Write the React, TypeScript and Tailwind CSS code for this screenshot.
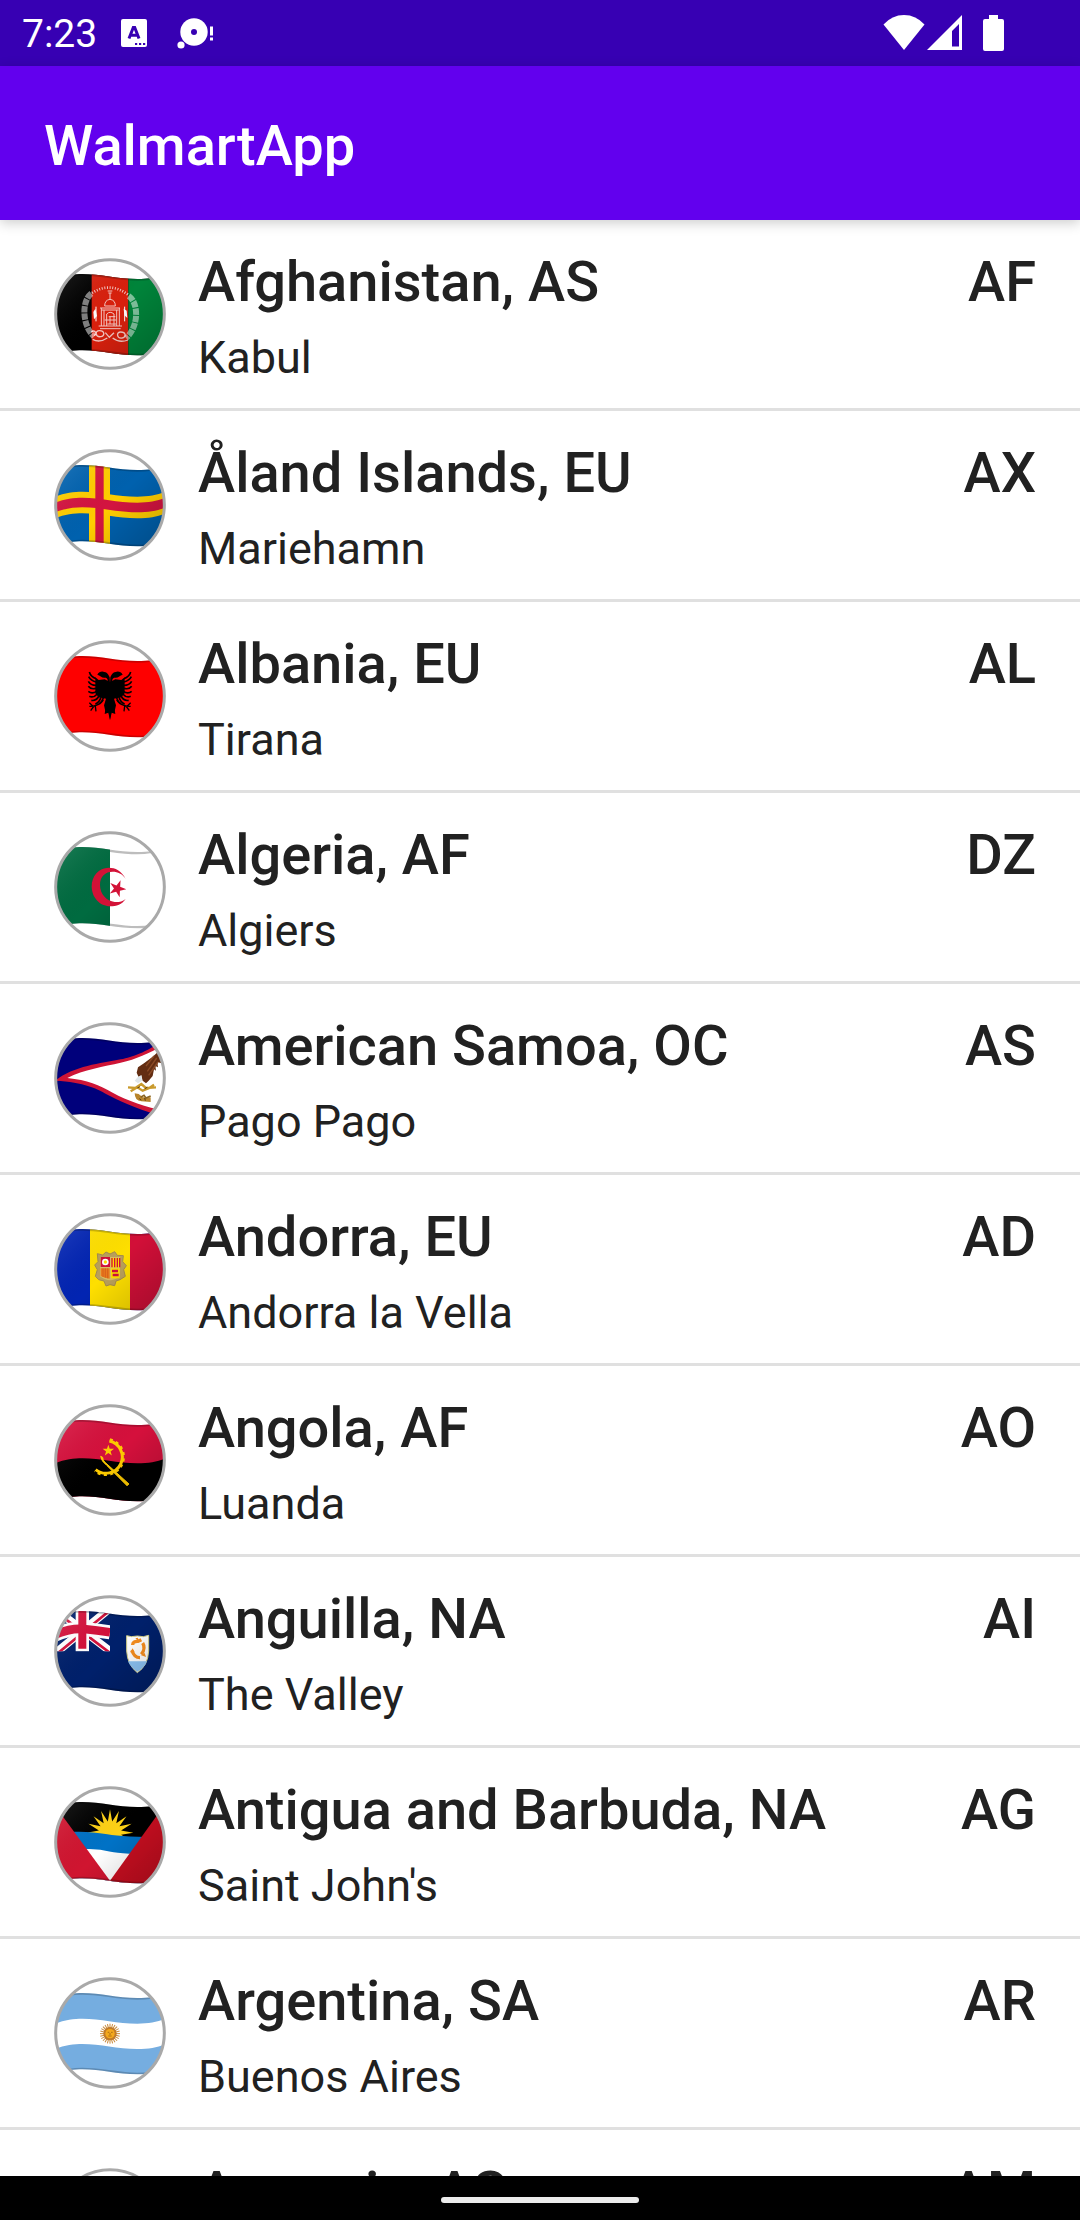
import React from "react";

type Country = {
  name: string;
  region: string;
  code: string;
  capital: string;
};

const countries: Country[] = [
  { name: "Afghanistan", region: "AS", code: "AF", capital: "Kabul" },
  { name: "Åland Islands", region: "EU", code: "AX", capital: "Mariehamn" },
  { name: "Albania", region: "EU", code: "AL", capital: "Tirana" },
  { name: "Algeria", region: "AF", code: "DZ", capital: "Algiers" },
  { name: "American Samoa", region: "OC", code: "AS", capital: "Pago Pago" },
  { name: "Andorra", region: "EU", code: "AD", capital: "Andorra la Vella" },
  { name: "Angola", region: "AF", code: "AO", capital: "Luanda" },
  { name: "Anguilla", region: "NA", code: "AI", capital: "The Valley" },
  { name: "Antigua and Barbuda", region: "NA", code: "AG", capital: "Saint John's" },
  { name: "Argentina", region: "SA", code: "AR", capital: "Buenos Aires" },
  { name: "Armenia", region: "AS", code: "AM", capital: "Yerevan" },
];

// A wavy horizontal band of cloth; both offsets are measured from the flag's top edge.
function band(top: number, bottom: number) {
  const a = top;
  const b = bottom;
  return (
    `M0 ${64 + a}C30 ${52 + a} 60 ${48 + a} 85 ${48 + a}C140 ${48 + a} 190 ${63 + a} 250 ${63 + a}C285 ${63 + a} 310 ${58 + a} 336 ${48 + a}` +
    `L336 ${48 + b}C310 ${58 + b} 285 ${63 + b} 250 ${63 + b}C190 ${63 + b} 140 ${48 + b} 85 ${48 + b}C60 ${48 + b} 30 ${52 + b} 0 ${64 + b}Z`
  );
}

function star(cx: number, cy: number, outer: number, inner: number, points: number, turn: number) {
  const out: string[] = [];
  for (let i = 0; i < points * 2; i++) {
    const r = i % 2 === 0 ? outer : inner;
    const t = ((turn + (i * 180) / points) * Math.PI) / 180;
    out.push(`${(cx + r * Math.cos(t)).toFixed(1)},${(cy + r * Math.sin(t)).toFixed(1)}`);
  }
  return out.join(" ");
}

const spokes = (n: number, from: number, to: number) =>
  Array.from({ length: n }, (_, i) => from + ((to - from) * i) / (n - 1));

function Afghanistan() {
  return (
    <>
      <rect width="336" height="336" fill="#000" />
      <rect x="113" width="110" height="336" fill="#d8200f" />
      <rect x="223" width="113" height="336" fill="#00843a" />
      <g fill="none" stroke="#fff">
        <g opacity="0.5" strokeWidth="18">
          <path d="M112 106C82 130 84 202 120 236" strokeDasharray="19 3" />
          <path d="M224 114C256 136 254 208 216 240" strokeDasharray="19 3" />
        </g>
        <g opacity="0.75" strokeWidth="3">
          <path d="M114 105Q168 70 222 110" strokeWidth="8" strokeDasharray="3 5" />
          <path d="M161 99h14M163 105h10M168 105v20" />
          <path d="M152 144q0-18 16-20q16 2 16 20zM138 150h60M142 156h52M142 150v54M150 156v48M196 150v54M188 156v48M134 204h70M138 212h62" />
          <path d="M158 204v-36q10-10 22 0v36M164 176h20M168 176v22M152 186h34M160 198h26" />
          <path d="M112 222c10-10 20 8 8 10M136 218c-14 0-12 20 4 18c14-2 12-18-4-18M200 222c-14 0-12 20 4 18c14-2 12-18-4-18M154 224l12 14l14-14M116 244q20 12 44-4M176 240q20 16 46 6" strokeWidth="4" />
        </g>
      </g>
      <path d="M126 146v44M212 146v44" stroke="#fff" strokeWidth="3" />
      <path d="M124 152l-6 10l2 22l9-10zM209 152l9 6l2 22l-9-8z" fill="#fff" />
    </>
  );
}

function Aland() {
  return (
    <>
      <rect width="336" height="336" fill="#0061ae" />
      <rect x="105" width="63" height="336" fill="#ffcd00" />
      <path d={band(80, 145)} fill="#ffcd00" />
      <rect x="124" width="25" height="336" fill="#d31440" />
      <path d={band(98, 127)} fill="#d31440" />
    </>
  );
}

function Albania() {
  const half = (
    <>
      <path d="M0 132L-8 128C-5 120-8 112-16 113C-24 114-30 107-38 104C-34 96-24 92-17 96C-6 98-4 106-1 112Z" />
      <path d="M0 126L-16 118L-34 120L-44 112V160L-34 172L-12 176L-18 196L-14 214L-6 208L0 238Z" />
      <path
        d="M-42 116Q-58 110-62 96M-42 126Q-58 122-64 110M-42 136Q-58 136-65 124M-42 145Q-58 149-65 139M-40 154Q-54 163-65 154M-38 162Q-50 175-62 169M-33 168Q-42 184-56 181M-27 172Q-32 188-44 192M-20 174Q-24 186-32 192"
        fill="none"
        stroke="#000"
        strokeWidth="5"
      />
      <path d="M-20 180Q-34 200-62 199M-48 198l-10 14M-44 198l2 16M-52 198l-10-10" fill="none" stroke="#000" strokeWidth="4" />
    </>
  );
  return (
    <>
      <rect width="336" height="336" fill="#fe0000" />
      <g transform="translate(168 0)">
        {half}
        <g transform="scale(-1 1)">{half}</g>
        <path d="M-12 196L-16 222L-5 218L0 241L5 218L16 222L12 196Z" />
      </g>
    </>
  );
}

function Algeria() {
  return (
    <>
      <rect width="336" height="336" fill="#fff" />
      <path d={band(0, 229)} fill="none" stroke="#bdbdbd" strokeWidth="14" />
      <rect width="168" height="336" fill="#006b40" />
      <rect width="168" height="336" fill="url(#shade-DZ)" />
      <path
        d="M215 143C202 119 184 110 164 110C134 110 113 136 113 166C113 200 138 226 168 226C188 226 204 220 215 204C204 212 194 214 182 213C158 210 138 190 138 162C138 136 154 122 176 122C192 122 204 128 215 143Z"
        fill="#d31237"
      />
      <polygon points={star(190, 173, 27, 10, 5, 3)} fill="#d31237" />
    </>
  );
}

function AmericanSamoa() {
  return (
    <>
      <rect width="336" height="336" fill="#00007b" />
      <path d="M4 176C60 132 140 124 200 112C240 104 270 92 336 52V286C270 268 210 244 168 222C130 200 90 180 4 176Z" fill="#ce1436" />
      <path d="M40 168C90 142 150 134 200 122C250 111 280 96 336 66V268C280 256 220 236 176 212C136 190 100 174 40 168Z" fill="#fff" />
      <path d="M314 88L296 104L270 124L252 136L248 152L254 166L262 160L266 176L276 184L284 176L296 162L300 142L306 146L304 132L312 136L310 120L322 124V90Z" fill="#632d12" />
      <path d="M300 102L276 132M308 108L280 148M312 120L284 160" stroke="#8b4a25" strokeWidth="4" />
      <path d="M252 164L242 176L252 184L264 176L262 160Z" fill="#dfe6ea" />
      <path d="M222 196L244 198L262 186L276 198L306 196M230 208L250 196L266 206L286 198L300 188" stroke="#c99a2c" strokeWidth="7" fill="none" />
      <path d="M242 214Q242 236 262 238L290 240V226L266 226L254 216Z" fill="#b8842b" />
      <path d="M260 226l10-6l6 8l14-6" stroke="#8a6420" strokeWidth="5" fill="none" />
      <path d="M250 198l8-4M272 200l8-4M256 230l6 4M272 228l2 8" stroke="#5a3a12" strokeWidth="3" />
    </>
  );
}

function Andorra() {
  return (
    <>
      <rect width="336" height="336" fill="#0224b2" />
      <rect x="108" width="120" height="336" fill="#fedf00" />
      <rect x="228" width="108" height="336" fill="#d20f38" />
      <path
        d="M130 122L146 126L156 117L168 123L182 116L190 127L208 128L206 146L217 158L209 170L214 190L198 200L186 204L182 218L168 215L156 219L150 204L134 200L124 190L130 170L122 156L132 146Z"
        fill="#b9a05b"
        stroke="#a38c4e"
        strokeWidth="3"
      />
      <path d="M138 132h60v58q-16 12-30 12t-30-12z" fill="#d9bd63" />
      <rect x="140" y="132" width="28" height="30" fill="#d0103a" />
      <circle cx="154" cy="147" r="10" fill="#fff" />
      <circle cx="154" cy="147" r="5" fill="#fedf00" />
      <rect x="171" y="135" width="27" height="28" fill="#fedf00" />
      <path d="M174 135v28M182 135v28M190 135v28M197 135v28" stroke="#d0103a" strokeWidth="4" />
      <path d="M140 166h27v31q-14-2-27-8z" fill="#e97b1d" />
      <path d="M147 166v26M154 166v28M161 166v30" stroke="#d0531a" strokeWidth="2" />
      <rect x="171" y="166" width="26" height="30" fill="#fedf00" />
      <path d="M174 174h18M176 186h18" stroke="#d0103a" strokeWidth="7" />
    </>
  );
}

function Angola() {
  return (
    <>
      <rect width="336" height="336" fill="#d5103c" />
      <path d={band(115, 260)} fill="#000" />
      <path d="M166 111A49 49 0 1 1 125 197" fill="none" stroke="#fecb00" strokeWidth="9" />
      <path d="M168 106A54 54 0 1 1 122 201" fill="none" stroke="#fecb00" strokeWidth="7" strokeDasharray="9 10" />
      <path d="M140 157Q142 172 158 184L219 245L225 240L152 174Q146 168 146 160Z" fill="#fecb00" stroke="#fecb00" strokeWidth="3" />
      <polygon points={star(163, 140, 18, 7, 5, -90)} fill="#fecb00" />
    </>
  );
}

function Anguilla() {
  return (
    <>
      <rect width="336" height="336" fill="#00206b" />
      <svg x="0" y="30" width="168" height="139" viewBox="0 30 168 139">
        <path d="M0 40L168 168M168 40L0 178" stroke="#fff" strokeWidth="24" />
        <path d="M0 46L168 174M168 46L0 184" stroke="#d3103a" strokeWidth="8" />
        <path d="M0 120Q50 98 90 102T168 112" stroke="#fff" strokeWidth="42" fill="none" />
        <path d="M85 30V170" stroke="#fff" strokeWidth="40" />
        <path d="M0 120Q50 98 90 102T168 112" stroke="#d3103a" strokeWidth="26" fill="none" />
        <path d="M85 30V161" stroke="#d3103a" strokeWidth="24" />
      </svg>
      <path d="M218 122L232 125L250 123L268 125L284 121V168Q282 212 250 233Q220 210 218 168Z" fill="#fff" stroke="#d6d38a" strokeWidth="3" />
      <path d="M222 199H279Q270 220 250 230Q230 218 222 199Z" fill="#8dc4f5" />
      <g fill="none" stroke="#f68e1e" strokeWidth="10">
        <path d="M236 150Q236 138 252 139L262 134" />
        <path d="M266 144Q276 160 262 178" />
        <path d="M258 188Q240 188 234 166" />
      </g>
      <path d="M244 130l8-2l2 12zM272 174l4 12l-16-6zM228 172l8-12l6 12z" fill="#f68e1e" />
    </>
  );
}

function Antigua() {
  return (
    <>
      <rect width="336" height="336" fill="#000" />
      <polygon points={star(168, 140, 70, 34, 16, -90)} fill="#fdd116" />
      <path d="M0 137H68Q110 136 160 145T336 154V300H0Z" fill="#0072c6" />
      <path d="M0 189H106Q140 190 170 197T336 206V300H0Z" fill="#fff" />
      <path d="M-20 28L168 284V336H-20Z" fill="#d01530" />
      <path d="M352 28L168 284V336H352Z" fill="#c80e20" />
    </>
  );
}

function Argentina() {
  return (
    <>
      <rect width="336" height="336" fill="#75ade0" />
      <path d={band(77, 153)} fill="#fff" />
      <g stroke="#c98a3c" strokeWidth="3">
        {spokes(24, 0, 345).map((a) => (
          <path key={a} d="M168 170V140" transform={`rotate(${a} 168 170)`} />
        ))}
      </g>
      <circle cx="168" cy="170" r="20" fill="#c07a28" />
      <circle cx="168" cy="170" r="14" fill="#f4a81c" />
      <path d="M161 166h5M171 166h5M168 168v6M163 177h10" stroke="#8a5312" strokeWidth="2" />
    </>
  );
}

function Armenia() {
  return (
    <>
      <rect width="336" height="336" fill="#d90012" />
      <path d={band(76, 153)} fill="#0033a0" />
      <path d={band(153, 240)} fill="#f2a800" />
    </>
  );
}

const flags: Record<string, () => React.JSX.Element> = {
  AF: Afghanistan,
  AX: Aland,
  AL: Albania,
  DZ: Algeria,
  AS: AmericanSamoa,
  AD: Andorra,
  AO: Angola,
  AI: Anguilla,
  AG: Antigua,
  AR: Argentina,
  AM: Armenia,
};

const flatFlags = ["DZ", "AL", "AS", "AR"];

function Flag({ code, name }: { code: string; name: string }) {
  const Art = flags[code];
  return (
    <svg viewBox="0 0 336 336" className="size-28 shrink-0" role="img" aria-label={`Flag of ${name}`}>
      <defs>
        <clipPath id={`round-${code}`}>
          <circle cx="168" cy="168" r="163" />
        </clipPath>
        <clipPath id={`cloth-${code}`}>
          <path d={band(0, 229)} />
        </clipPath>
        <linearGradient id={`shade-${code}`} gradientUnits="userSpaceOnUse" x1="0" y1="0" x2="336" y2="336">
          <stop offset="0.15" stopColor="#fff" stopOpacity="0.08" />
          <stop offset="0.5" stopColor="#000" stopOpacity="0" />
          <stop offset="0.9" stopColor="#000" stopOpacity="0.2" />
        </linearGradient>
      </defs>
      <circle cx="168" cy="168" r="163" fill="#fff" />
      <g clipPath={`url(#round-${code})`}>
        <g clipPath={`url(#cloth-${code})`}>
          <Art />
          {!flatFlags.includes(code) && <rect width="336" height="336" fill={`url(#shade-${code})`} />}
          {code !== "DZ" && <path d={band(0, 229)} fill="none" stroke="#000" strokeOpacity="0.2" strokeWidth="10" />}
        </g>
      </g>
      <circle cx="168" cy="168" r="163" fill="none" stroke="#a9a9a9" strokeWidth="9" />
    </svg>
  );
}

function StatusBar() {
  return (
    <div className="flex h-[66px] shrink-0 items-center bg-[#3700b3] pl-[22px] pr-[75px] text-white">
      <span className="pt-[2px] text-[39px] leading-[48px]">7:23</span>
      <svg viewBox="0 0 26 28" className="ml-6 h-7 w-[26px]" aria-hidden="true">
        <rect width="26" height="28" rx="2" fill="#fff" />
        <path d="M8 19.500L12.300 8.500h1.400L18 19.500M9.800 16.300h6.400" fill="none" stroke="#3700b3" strokeWidth="3" />
        <path d="M14 24h2.200v2H14zM18 24h2.200v2H18zM22 24h2.200v2H22z" fill="#3700b3" />
      </svg>
      <svg viewBox="0 0 38 32" className="ml-[29px] h-8 w-[38px]" fill="#fff" aria-hidden="true">
        <circle cx="18" cy="15" r="13.700" />
        <circle cx="18" cy="15" r="3" fill="#3700b3" />
        <circle cx="5" cy="28" r="3.600" />
        <path d="M34 9.500h3v9h-3zM34 20.500h3v3h-3z" />
      </svg>
      <div className="ml-auto flex items-center">
        <svg viewBox="0 0 42 36" className="h-9 w-[42px]" fill="#fff" aria-hidden="true">
          <path d="M21 35L0.500 9.500Q9 0 21 0T41.500 9.500Z" />
        </svg>
        <svg viewBox="0 0 36 36" className="ml-[2px] size-9" aria-hidden="true">
          <path fillRule="evenodd" d="M35 0V35H0ZM32 9L25 16V31.500H32Z" fill="#fff" />
        </svg>
        <svg viewBox="0 0 22 36" className="ml-5 h-9 w-[22px]" fill="#fff" aria-hidden="true">
          <path d="M6 0h9v4h4q2 0 2 2v28q0 2-2 2H2q-2 0-2-2V6q0-2 2-2h4z" />
        </svg>
      </div>
    </div>
  );
}

function CountryRow({ country }: { country: Country }) {
  return (
    <li className="flex items-center border-b-[3px] border-[#e0e0e0] pl-[54px] pr-[44px]">
      <Flag code={country.code} name={country.name} />
      <div className="ml-8 min-w-0 flex-1 pt-[30px] pb-6">
        <div className="flex justify-between gap-4 text-[56px] leading-[64px] font-medium">
          <h2>
            {country.name}, {country.region}
          </h2>
          <span>{country.code}</span>
        </div>
        <p className="mt-[18px] text-[45px] leading-[52px]">{country.capital}</p>
      </div>
    </li>
  );
}

export default function App() {
  return (
    <div className="flex h-screen flex-col overflow-hidden bg-white font-['Roboto',sans-serif] text-[#212121]">
      <StatusBar />
      <header className="relative z-10 flex shrink-0 items-center bg-[#6200ee] px-[44px] pt-12 pb-[42px] text-white shadow-[0_3px_12px_rgba(0,0,0,0.2)]">
        <h1 className="text-[56px] leading-[64px] font-medium">WalmartApp</h1>
      </header>
      <main className="min-h-0 flex-1 overflow-y-auto [scrollbar-width:none]">
        <ul>
          {countries.map((country) => (
            <CountryRow key={country.code} country={country} />
          ))}
        </ul>
      </main>
      <footer className="flex h-11 shrink-0 items-center justify-center bg-black pt-1">
        <div className="h-[6px] w-[198px] rounded-full bg-[#ebebeb]" />
      </footer>
    </div>
  );
}
